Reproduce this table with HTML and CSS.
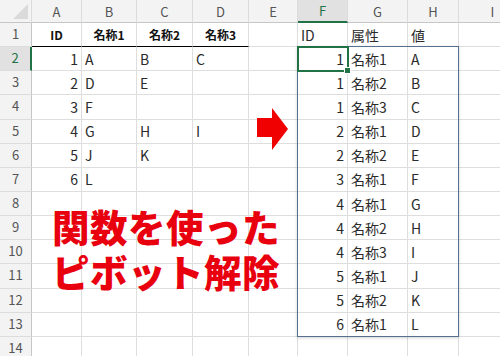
FILE: index.html
```html
<!DOCTYPE html>
<html lang="ja">
<head>
<meta charset="utf-8">
<title>Sheet</title>
<link rel="stylesheet" href="styles.css">
</head>
<body>
<div class="sheet">
  <div class="row hdr">
    <div class="c corner"><span class="tri"></span></div>
    <div class="c">A</div><div class="c">B</div><div class="c">C</div><div class="c">D</div><div class="c">E</div>
    <div class="c sel">F</div><div class="c">G</div><div class="c">H</div><div class="c">I</div>
  </div>
  <div class="row">
    <div class="c rn">1</div>
    <div class="c th">ID</div><div class="c th">名称1</div><div class="c th">名称2</div><div class="c th">名称3</div><div class="c"></div>
    <div class="c">ID</div><div class="c">属性</div><div class="c">値</div><div class="c"></div>
  </div>
  <div class="row">
    <div class="c rn sel">2</div>
    <div class="c num">1</div><div class="c">A</div><div class="c">B</div><div class="c">C</div><div class="c"></div>
    <div class="c num">1</div><div class="c">名称1</div><div class="c">A</div><div class="c"></div>
  </div>
  <div class="row">
    <div class="c rn">3</div>
    <div class="c num">2</div><div class="c">D</div><div class="c">E</div><div class="c"></div><div class="c"></div>
    <div class="c num">1</div><div class="c">名称2</div><div class="c">B</div><div class="c"></div>
  </div>
  <div class="row">
    <div class="c rn">4</div>
    <div class="c num">3</div><div class="c">F</div><div class="c"></div><div class="c"></div><div class="c"></div>
    <div class="c num">1</div><div class="c">名称3</div><div class="c">C</div><div class="c"></div>
  </div>
  <div class="row">
    <div class="c rn">5</div>
    <div class="c num">4</div><div class="c">G</div><div class="c">H</div><div class="c">I</div><div class="c"></div>
    <div class="c num">2</div><div class="c">名称1</div><div class="c">D</div><div class="c"></div>
  </div>
  <div class="row">
    <div class="c rn">6</div>
    <div class="c num">5</div><div class="c">J</div><div class="c">K</div><div class="c"></div><div class="c"></div>
    <div class="c num">2</div><div class="c">名称2</div><div class="c">E</div><div class="c"></div>
  </div>
  <div class="row">
    <div class="c rn">7</div>
    <div class="c num">6</div><div class="c">L</div><div class="c"></div><div class="c"></div><div class="c"></div>
    <div class="c num">3</div><div class="c">名称1</div><div class="c">F</div><div class="c"></div>
  </div>
  <div class="row">
    <div class="c rn">8</div>
    <div class="c"></div><div class="c"></div><div class="c"></div><div class="c"></div><div class="c"></div>
    <div class="c num">4</div><div class="c">名称1</div><div class="c">G</div><div class="c"></div>
  </div>
  <div class="row">
    <div class="c rn">9</div>
    <div class="c"></div><div class="c"></div><div class="c"></div><div class="c"></div><div class="c"></div>
    <div class="c num">4</div><div class="c">名称2</div><div class="c">H</div><div class="c"></div>
  </div>
  <div class="row">
    <div class="c rn">10</div>
    <div class="c"></div><div class="c"></div><div class="c"></div><div class="c"></div><div class="c"></div>
    <div class="c num">4</div><div class="c">名称3</div><div class="c">I</div><div class="c"></div>
  </div>
  <div class="row">
    <div class="c rn">11</div>
    <div class="c"></div><div class="c"></div><div class="c"></div><div class="c"></div><div class="c"></div>
    <div class="c num">5</div><div class="c">名称1</div><div class="c">J</div><div class="c"></div>
  </div>
  <div class="row">
    <div class="c rn">12</div>
    <div class="c"></div><div class="c"></div><div class="c"></div><div class="c"></div><div class="c"></div>
    <div class="c num">5</div><div class="c">名称2</div><div class="c">K</div><div class="c"></div>
  </div>
  <div class="row">
    <div class="c rn">13</div>
    <div class="c"></div><div class="c"></div><div class="c"></div><div class="c"></div><div class="c"></div>
    <div class="c num">6</div><div class="c">名称1</div><div class="c">L</div><div class="c"></div>
  </div>
  <div class="row">
    <div class="c rn">14</div>
    <div class="c"></div><div class="c"></div><div class="c"></div><div class="c"></div><div class="c"></div>
    <div class="c"></div><div class="c"></div><div class="c"></div><div class="c"></div>
  </div>

  <div class="outline"></div>
  <div class="cursor"><span class="handle"></span></div>

  <svg class="arrow" width="36" height="46" viewBox="0 0 36 46">
    <polygon points="2,11 17,11 17,1 33,22 17,43 17,30 2,30" fill="#f00000"/>
  </svg>

  <div class="title">関数を使った<br>ピボット解除</div>
</div>
</body>
</html>
```
FILE: styles.css
```css
html, body {
  margin: 0;
  padding: 0;
  background: #fff;
  overflow: hidden;
}
.sheet {
  position: relative;
  width: 500px;
  height: 356px;
  overflow: hidden;
  font-family: "Noto Sans CJK JP", "Noto Sans", sans-serif;
  color: #2a2a2a;
}
.row {
  display: grid;
  grid-template-columns: 32px 50px 55px 56px 56px 49px 50px 60px 51px 68px;
  height: 24.15px;
}
.row.hdr {
  height: 23px;
}
.c {
  box-sizing: border-box;
  border-right: 1px solid #dedede;
  border-bottom: 1px solid #dedede;
  font-size: 14px;
  display: flex;
  align-items: center;
  padding: 0 3px;
  white-space: nowrap;
  overflow: hidden;
}
.hdr .c {
  background: #f3f3f3;
  border-right: 1px solid #dcdcdc;
  border-bottom: 1px solid #c6c6c6;
  color: #555;
  font-size: 13px;
  justify-content: center;
}
.hdr .c.sel {
  background: #e1e1e1;
  color: #217346;
  border-bottom: 2px solid #217346;
}
.corner {
  position: relative;
}
.tri {
  position: absolute;
  right: 3px;
  bottom: 3px;
  width: 0;
  height: 0;
  border-left: 15px solid transparent;
  border-bottom: 15px solid #dadada;
}
.c.rn {
  background: #f3f3f3;
  border-right: 1px solid #c6c6c6;
  border-bottom: 1px solid #dcdcdc;
  color: #555;
  font-size: 13px;
  justify-content: center;
  padding-bottom: 2px;
}
.c.rn.sel {
  background: #e1e1e1;
  color: #217346;
  border-right: 2px solid #217346;
}
.c.th {
  font-weight: 700;
  font-size: 12px;
  justify-content: center;
  border-bottom: 1px solid #000;
  color: #111;
}
.c.num {
  justify-content: flex-end;
}
.outline {
  position: absolute;
  left: 297px;
  top: 46px;
  width: 162px;
  height: 291px;
  box-sizing: border-box;
  border: 1.5px solid #55708f;
  box-shadow: 0 1px 3px rgba(0, 0, 0, 0.18);
  pointer-events: none;
}
.cursor {
  position: absolute;
  left: 297px;
  top: 46px;
  width: 52px;
  height: 26px;
  box-sizing: border-box;
  border: 2px solid #217346;
}
.handle {
  position: absolute;
  right: -4px;
  bottom: -4px;
  width: 5px;
  height: 5px;
  background: #217346;
  border: 1px solid #fff;
}
.arrow {
  position: absolute;
  left: 255px;
  top: 107px;
}
.title {
  position: absolute;
  left: 52px;
  top: 203px;
  font-size: 37.5px;
  line-height: 45px;
  font-weight: 900;
  letter-spacing: 0.5px;
  color: #e8000e;
  white-space: nowrap;
}
```
